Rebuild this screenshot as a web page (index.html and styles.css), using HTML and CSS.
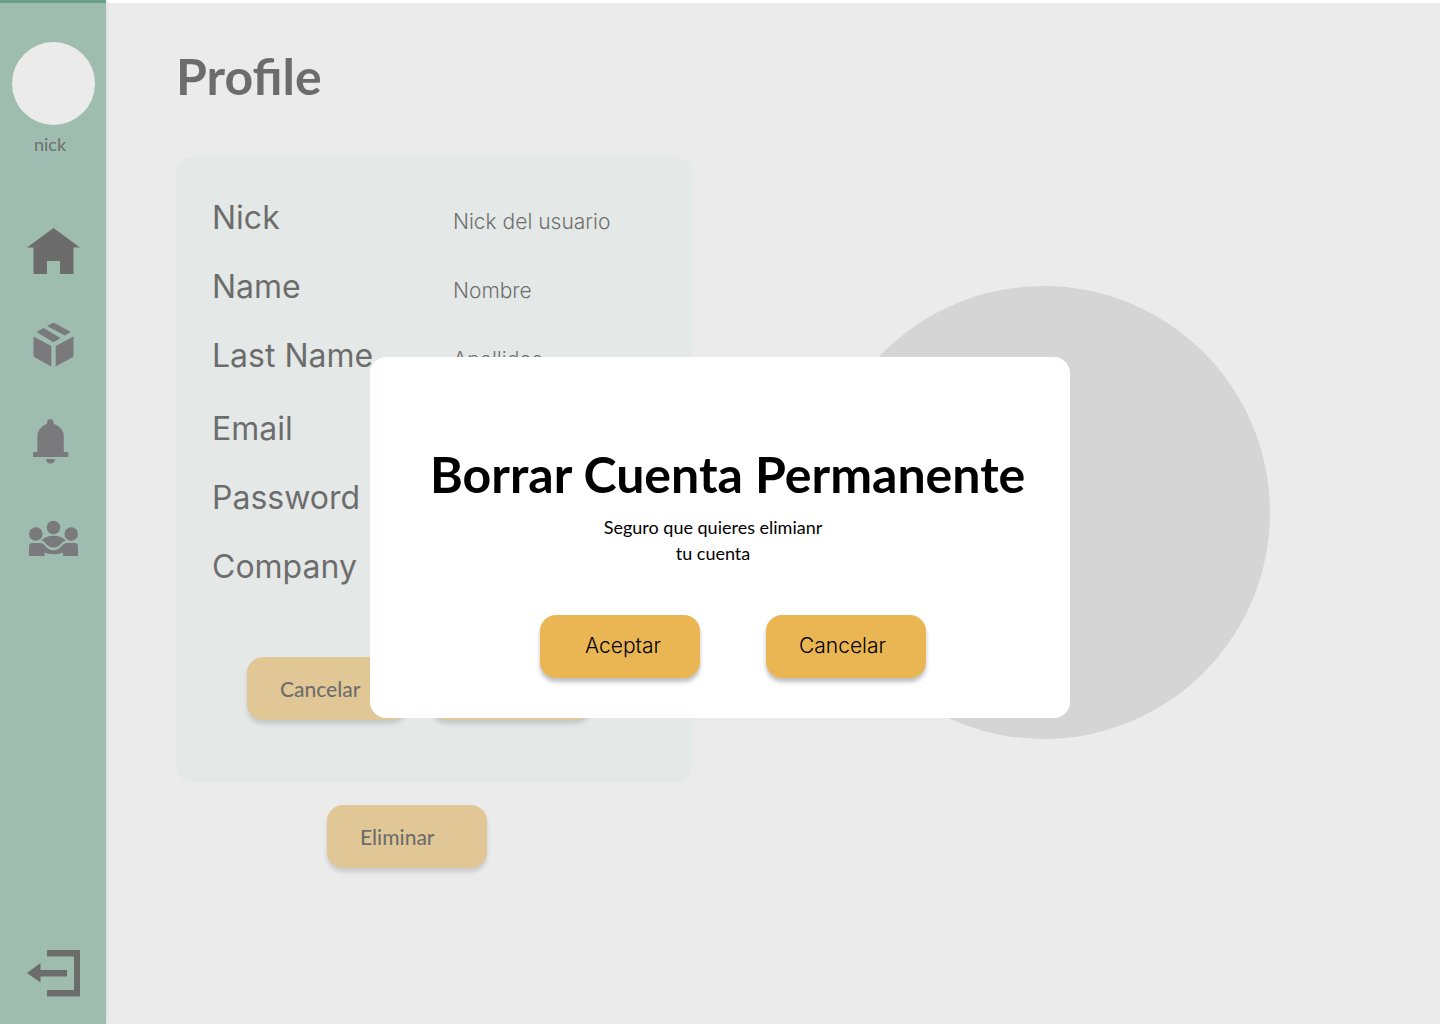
FILE: index.html
```html
<!DOCTYPE html>
<html lang="es">
<head>
<meta charset="utf-8">
<meta name="viewport" content="width=device-width, initial-scale=1">
<title>Profile</title>
<link rel="stylesheet" href="styles.css">
</head>
<body>
<div class="app">
  <aside class="sidebar">
    <div class="avatar"></div>
    <p class="nick">nick</p>
    <nav class="menu" aria-label="Menu">
      <a class="menu-link" href="#home" aria-label="Home">
        <svg class="icon-solid" width="54" height="48" viewBox="-1 0 54 48"><path d="M26.500 1 0 20.500h6.500V47H20V34h13v13h13.500V20.500H53z"/></svg>
      </a>
      <a class="menu-link" href="#packages" aria-label="Packages">
        <svg class="icon-soft" width="54" height="48" viewBox="-1 3 54 48"><path d="M6.500 16.500 24.300 26v20.500L8 37.500Q6.500 36.500 6.500 35zM46.500 16.500 28.700 26v20.500l16.300-9q1.500-1 1.500-2.500zM9.500 12l6-3.500q1-.500 2 0L33.500 18l-6 3.700q-1 .500-2 0zM20 6l5.500-3q1-.500 2 0L43.800 12l-6 3.500z"/></svg>
      </a>
      <a class="menu-link" href="#alerts" aria-label="Notifications">
        <svg class="icon-soft" width="54" height="48" viewBox="-1 2 54 48"><path d="M6 40v-5h4.300V20q0-9.500 9.700-13.200V5.500a3.300 3.300 0 0 1 6.600 0v1.300Q36.800 10.500 36.800 20v15h4.500v5zM19 42h9q-.500 4.500-4.500 4.500T19 42z"/></svg>
      </a>
      <a class="menu-link" href="#teams" aria-label="Teams">
        <svg class="icon-soft" width="54" height="48" viewBox="0 0 54 48"><circle cx="27.500" cy="12.500" r="6.800"/><circle cx="9.800" cy="19" r="6.800"/><circle cx="45.200" cy="19" r="6.800"/><path d="M3 41V31.500Q3 28 6.500 28H14c5.500 0 6 7.300 13.500 7.300S35.500 28 41 28h7.500q3.500 0 3.500 3.500V41H37v-3.500q-9.500 3.500-18.500 0V41zM15.200 25.500q4.800-4.800 12.300-4.800t12.300 4.800q-2.800.5-4.800 3.300-2.700 3.700-7.500 3.700T20 28.800q-2-2.800-4.800-3.300z"/><path d="M18.500 37h18.500q-4 2.200-9.500 2.200T18.500 37z"/></svg>
      </a>
    </nav>
    <a class="logout" href="#logout" aria-label="Log out">
      <svg class="icon-solid" width="54" height="48" viewBox="-1 0 54 48"><path d="M20 1h33v46.500H20V41h27V7.500H20zM0 24l13.500-10v7H40v6.500H13.500v6z"/></svg>
    </a>
  </aside>

  <main class="main">
    <section class="profile">
      <h1 class="title">Profile</h1>
      <div class="card">
        <dl class="fields">
          <div class="field"><dt>Nick</dt><dd>Nick del usuario</dd></div>
          <div class="field"><dt>Name</dt><dd>Nombre</dd></div>
          <div class="field"><dt>Last Name</dt><dd>Apellidos</dd></div>
        </dl>
        <dl class="fields">
          <div class="field"><dt>Email</dt><dd></dd></div>
          <div class="field"><dt>Password</dt><dd></dd></div>
          <div class="field"><dt>Company</dt><dd></dd></div>
        </dl>
        <div class="card-actions">
          <button class="button button-strong" type="button">Cancelar</button>
          <button class="button button-strong" type="button" aria-label="Guardar"></button>
        </div>
      </div>
      <button class="button button-strong button-delete" type="button">Eliminar</button>
    </section>
    <div class="photo"></div>
  </main>
</div>

<div class="overlay">
  <div class="modal" role="dialog" aria-modal="true" aria-labelledby="modal-title">
    <h2 class="title" id="modal-title">Borrar Cuenta Permanente</h2>
    <p class="modal-text">Seguro que quieres elimianr<br>tu cuenta</p>
    <div class="modal-actions">
      <button class="button button-center" type="button">Aceptar</button>
      <button class="button" type="button">Cancelar</button>
    </div>
  </div>
</div>
</body>
</html>
```
FILE: styles.css
```css
* {
  box-sizing: border-box;
}

body {
  margin: 0;
  background: #fff;
  color: #000;
  font-family: Lato, sans-serif;
}

h1, h2, p, dl, dd {
  margin: 0;
}

svg {
  display: block;
}

.app {
  display: flex;
  min-height: 100vh;
}

.sidebar {
  display: flex;
  flex-direction: column;
  align-items: center;
  flex: 0 0 106px;
  padding: 42px 0 27px;
  background: #67a18a;
  box-shadow: 1px 0 4px rgba(0, 0, 0, 0.15);
}

.avatar {
  width: 83px;
  height: 83px;
  border-radius: 50%;
  background: #fff;
}

.nick {
  margin-top: 7px;
  padding-right: 6px;
  font-size: 18px;
  line-height: 24px;
}

.menu {
  display: flex;
  flex-direction: column;
  gap: 48px;
  margin-top: 71px;
}

.logout {
  margin-top: auto;
}

.icon-solid {
  fill: #000;
}

.icon-soft {
  fill: #1d1b20;
}

.main {
  display: flex;
  flex: 1;
  justify-content: space-between;
  padding: 44px 170px 40px 70px;
}

.profile {
  width: 516px;
}

.title {
  font-size: 50px;
  font-weight: 700;
  line-height: 64px;
  white-space: nowrap;
}

.card {
  margin-top: 49px;
  padding: 26px 36px 62px;
  border-radius: 16px;
  background: #f0f8f5;
}

.fields + .fields {
  margin-top: 4px;
}

.field {
  display: grid;
  grid-template-columns: 241px 1fr;
  align-items: baseline;
  height: 69px;
  font-family: Inter, sans-serif;
  line-height: 69px;
}

.field dt {
  font-size: 32px;
  font-weight: 400;
}

.field dd {
  font-size: 21px;
  font-weight: 300;
}

.card-actions {
  display: flex;
  gap: 24px;
  margin-top: 56px;
  padding-left: 35px;
}

.button {
  width: 160px;
  height: 63px;
  padding: 0 33px 2px;
  border: 0;
  border-radius: 16px;
  background: #eab654;
  box-shadow: 0 4px 4px rgba(0, 0, 0, 0.25);
  color: #000;
  font-family: Inter, sans-serif;
  font-size: 21px;
  font-weight: 300;
  text-align: left;
  cursor: pointer;
}

.button-strong {
  padding-bottom: 0;
  font-family: Lato, sans-serif;
  font-weight: 500;
}

.button-center {
  padding-right: 27px;
  text-align: center;
}

.button-delete {
  display: block;
  margin: 23px 0 0 151px;
}

.photo {
  width: 453px;
  height: 453px;
  margin-top: 242px;
  border-radius: 50%;
  background: #d3d3d3;
}

.overlay {
  position: fixed;
  inset: 3px 0 0;
  display: grid;
  place-items: center;
  padding-top: 48px;
  background: rgba(215, 215, 215, 0.5);
}

.modal {
  width: 700px;
  padding: 85px 42px 40px 60px;
  border-radius: 16px;
  background: #fff;
}

.modal-text {
  margin-top: 8px;
  padding-right: 32px;
  font-size: 18px;
  line-height: 26px;
  text-align: center;
}

.modal-actions {
  display: flex;
  justify-content: center;
  gap: 66px;
  margin-top: 49px;
  padding-left: 8px;
}
```
